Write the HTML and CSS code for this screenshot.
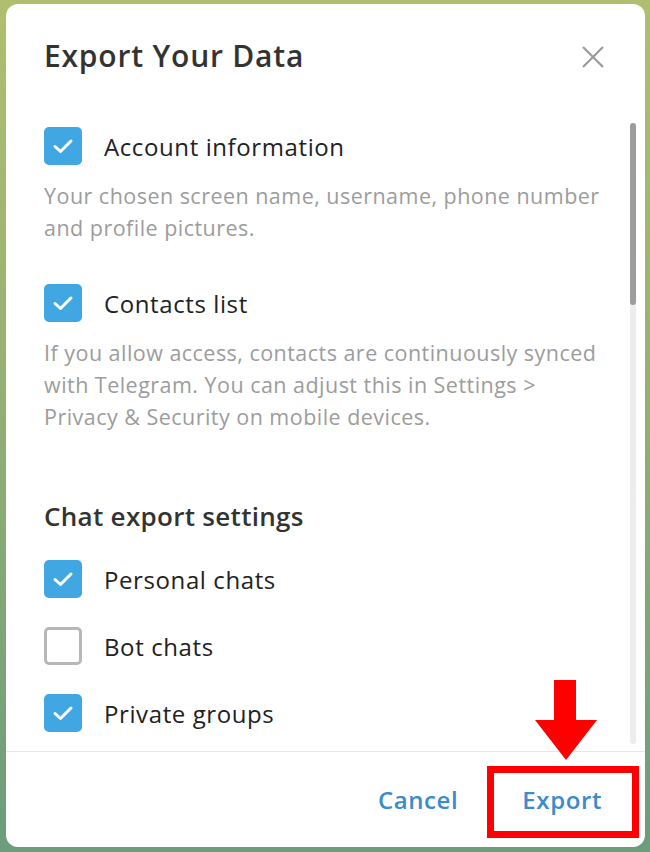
FILE: index.html
```html
<!DOCTYPE html>
<html lang="en">
<head>
    <meta charset="UTF-8">
    <meta name="viewport" content="width=device-width, initial-scale=1.0">
    <title>Export Your Data</title>
    <link rel="stylesheet" href="styles.css">
</head>
<body>
    <div class="dialog">
        <div class="header">
            <h1 class="title">Export Your Data</h1>
            <button class="close" aria-label="Close">
                <svg width="24" height="24" viewBox="0 0 24 24"><path d="M2 2 L22 22 M22 2 L2 22" stroke="#9a9a9a" stroke-width="2.2" fill="none"/></svg>
            </button>
        </div>
        <div class="content">
            <div class="list">
                <div class="option">
                    <span class="check on"><svg viewBox="0 0 38 38"><path d="M11 19.5 L16.5 24.5 L27 14" stroke="#fff" stroke-width="3" fill="none" stroke-linecap="round" stroke-linejoin="round"/></svg></span>
                    <span class="label">Account information</span>
                </div>
                <p class="desc">Your chosen screen name, username, phone number<br>and profile pictures.</p>

                <div class="option">
                    <span class="check on"><svg viewBox="0 0 38 38"><path d="M11 19.5 L16.5 24.5 L27 14" stroke="#fff" stroke-width="3" fill="none" stroke-linecap="round" stroke-linejoin="round"/></svg></span>
                    <span class="label">Contacts list</span>
                </div>
                <p class="desc">If you allow access, contacts are continuously synced<br>with Telegram. You can adjust this in Settings &gt;<br>Privacy &amp; Security on mobile devices.</p>

                <h2 class="section">Chat export settings</h2>

                <div class="option compact">
                    <span class="check on"><svg viewBox="0 0 38 38"><path d="M11 19.5 L16.5 24.5 L27 14" stroke="#fff" stroke-width="3" fill="none" stroke-linecap="round" stroke-linejoin="round"/></svg></span>
                    <span class="label">Personal chats</span>
                </div>
                <div class="option compact">
                    <span class="check"></span>
                    <span class="label">Bot chats</span>
                </div>
                <div class="option compact">
                    <span class="check on"><svg viewBox="0 0 38 38"><path d="M11 19.5 L16.5 24.5 L27 14" stroke="#fff" stroke-width="3" fill="none" stroke-linecap="round" stroke-linejoin="round"/></svg></span>
                    <span class="label">Private groups</span>
                </div>
            </div>
            <div class="scrollbar"><div class="thumb"></div></div>
        </div>
        <div class="footer">
            <button class="link">Cancel</button>
            <button class="link">Export</button>
        </div>

        <div class="mark-box"></div>
        <svg class="mark-arrow" width="66" height="82" viewBox="0 0 66 82">
            <polygon points="21,0 43,0 43,40 64,40 33,80 2,40 21,40" fill="#ff0000"/>
        </svg>
    </div>
</body>
</html>
```

FILE: styles.css
```css
html, body {
    margin: 0;
    height: 100%;
}
body {
    background: linear-gradient(180deg, #b0bf6e 0%, #95b173 45%, #6b9c7c 100%);
    font-family: "Open Sans", "Noto Sans", sans-serif;
    overflow: hidden;
}
.dialog {
    position: relative;
    box-sizing: border-box;
    margin: 4px 5px 0 6px;
    height: 843px;
    background: #fff;
    border-radius: 12px;
    display: flex;
    flex-direction: column;
}
.header {
    height: 110px;
    display: flex;
    align-items: flex-start;
    justify-content: space-between;
    padding: 0 40px 0 38px;
    flex-shrink: 0;
}
.title {
    margin: 32px 0 0 0;
    font-size: 30px;
    letter-spacing: 0.8px;
    font-weight: 600;
    color: #333;
    line-height: 40px;
}
.close {
    margin-top: 41px;
    border: none;
    background: none;
    padding: 0;
    width: 24px;
    height: 24px;
}
.content {
    flex: 1;
    display: flex;
    min-height: 0;
    padding-right: 9px;
}
.list {
    flex: 1;
    padding: 13px 0 0 38px;
}
.option {
    display: flex;
    align-items: center;
    height: 38px;
}
.option.compact {
    margin-bottom: 29px;
}
.check {
    box-sizing: border-box;
    width: 38px;
    height: 38px;
    border-radius: 5px;
    border: 3px solid #b7b7b7;
    flex-shrink: 0;
}
.check.on {
    background: #40a7e3;
    border-color: #40a7e3;
}
.check svg {
    display: block;
    width: 38px;
    height: 38px;
    margin: -3px;
}
.label {
    margin-left: 22px;
    font-size: 24px;
    letter-spacing: 0.6px;
    color: #222;
}
.desc {
    margin: 15px 0 40px 0;
    font-size: 21.5px;
    letter-spacing: 0.47px;
    line-height: 32px;
    color: #9c9c9c;
    white-space: nowrap;
}
.section {
    margin: 65px 0 26px 0;
    font-size: 26px;
    letter-spacing: 0.3px;
    font-weight: 600;
    color: #333;
    line-height: 36px;
}
.scrollbar {
    width: 6px;
    margin-top: 9px;
    margin-bottom: 7px;
    background: #ededed;
    border-radius: 3px;
}
.thumb {
    height: 182px;
    background: #9d9d9d;
    border-radius: 3px;
}
.footer {
    height: 95px;
    border-top: 1px solid #e6e6e6;
    display: flex;
    align-items: center;
    justify-content: flex-end;
    gap: 64px;
    padding: 0 43px 0 0;
    flex-shrink: 0;
}
.link {
    border: none;
    background: none;
    padding: 0;
    font-family: inherit;
    font-size: 24px;
    letter-spacing: 0.6px;
    font-weight: 600;
    color: #3a8ccb;
}
.mark-box {
    position: absolute;
    left: 481px;
    top: 762px;
    width: 152px;
    height: 72px;
    box-sizing: border-box;
    border: 7px solid #ff0000;
}
.mark-arrow {
    position: absolute;
    left: 527px;
    top: 676px;
}
```
